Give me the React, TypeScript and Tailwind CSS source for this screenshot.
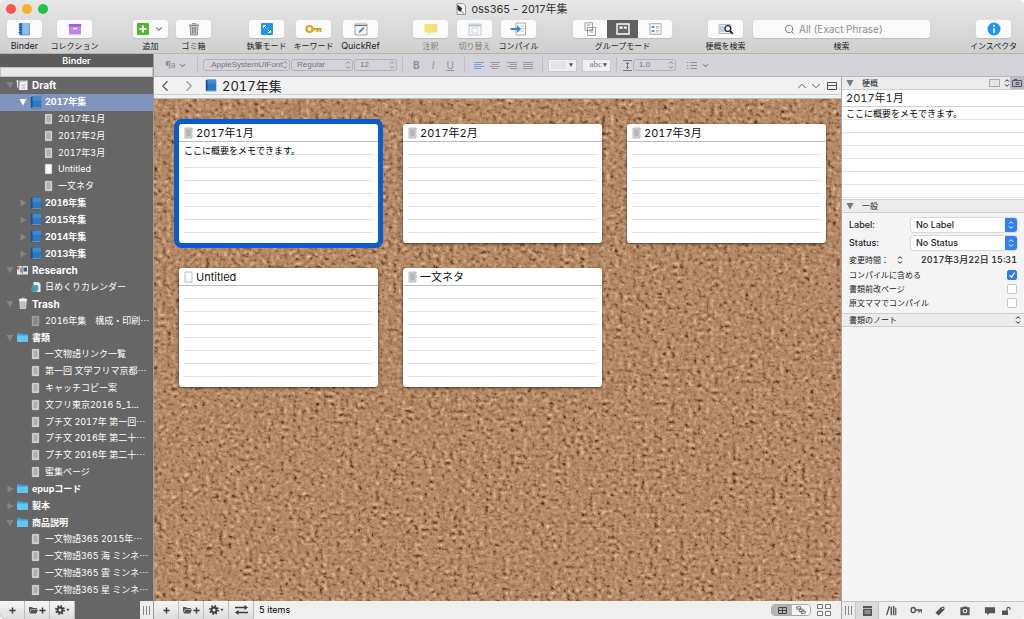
import { useState, type ReactNode } from 'react';
import clsx from 'clsx';
import { ChevronDown, ChevronLeft, ChevronRight, ChevronUp, Search } from 'lucide-react';

type IconName = 'draft' | 'book' | 'text' | 'blank' | 'research' | 'web' | 'trash' | 'dim' | 'folder';

interface BinderItem {
  title: string;
  icon: IconName;
  level: number;
  open?: boolean;
  bold?: boolean;
}

const BINDER: BinderItem[] = [
  { title: 'Draft', icon: 'draft', level: 0, open: true, bold: true },
  { title: '2017年集', icon: 'book', level: 1, open: true, bold: true },
  { title: '2017年1月', icon: 'text', level: 2 },
  { title: '2017年2月', icon: 'text', level: 2 },
  { title: '2017年3月', icon: 'text', level: 2 },
  { title: 'Untitled', icon: 'blank', level: 2 },
  { title: '一文ネタ', icon: 'text', level: 2 },
  { title: '2016年集', icon: 'book', level: 1, open: false, bold: true },
  { title: '2015年集', icon: 'book', level: 1, open: false, bold: true },
  { title: '2014年集', icon: 'book', level: 1, open: false, bold: true },
  { title: '2013年集', icon: 'book', level: 1, open: false, bold: true },
  { title: 'Research', icon: 'research', level: 0, open: true, bold: true },
  { title: '日めくりカレンダー', icon: 'web', level: 1 },
  { title: 'Trash', icon: 'trash', level: 0, open: true, bold: true },
  { title: '2016年集　構成・印刷…', icon: 'dim', level: 1 },
  { title: '書類', icon: 'folder', level: 0, open: true, bold: true },
  { title: '一文物語リンク一覧', icon: 'text', level: 1 },
  { title: '第一回 文学フリマ京都…', icon: 'text', level: 1 },
  { title: 'キャッチコピー案', icon: 'text', level: 1 },
  { title: '文フリ東京2016 5_1...', icon: 'text', level: 1 },
  { title: 'プチ文 2017年 第一回…', icon: 'text', level: 1 },
  { title: 'プチ文 2016年 第二十…', icon: 'text', level: 1 },
  { title: 'プチ文 2016年 第二十…', icon: 'text', level: 1 },
  { title: '蜜集ページ', icon: 'text', level: 1 },
  { title: 'epupコード', icon: 'folder', level: 0, open: false, bold: true },
  { title: '製本', icon: 'folder', level: 0, open: false, bold: true },
  { title: '商品説明', icon: 'folder', level: 0, open: true, bold: true },
  { title: '一文物語365 2015年…', icon: 'text', level: 1 },
  { title: '一文物語365 海 ミンネ…', icon: 'text', level: 1 },
  { title: '一文物語365 雲 ミンネ…', icon: 'text', level: 1 },
  { title: '一文物語365 星 ミンネ…', icon: 'text', level: 1 },
];

const CARDS = [
  { title: '2017年1月', synopsis: 'ここに概要をメモできます。' },
  { title: '2017年2月', synopsis: '' },
  { title: '2017年3月', synopsis: '' },
  { title: 'Untitled', synopsis: '', blank: true },
  { title: '一文ネタ', synopsis: '' },
];

const INDENT = ['pl-[5px]', 'pl-[18px]', 'pl-[31px]'];

const BookIcon = () => (
  <svg viewBox="0 0 12 13" className="h-[13px] w-3 shrink-0">
    <path d="M.8 1.500q0-.8.8-.8h9.600v11.600H1.600q-.8 0-.8-.8z" fill="#174f8d" />
    <path d="M2.600 .8h8.400v10.400H2.600z" fill="#2b79c5" />
    <path d="M2.600 .8h8.400v4H2.600z" fill="#3c8bd5" />
    <path d="M1.600 11.500h9.400" stroke="#b9c9d8" strokeWidth=".5" />
  </svg>
);

const PageIcon = ({ fill = '#ececec', ink = '#a2a2a2', lines = true }: { fill?: string; ink?: string; lines?: boolean }) => (
  <svg viewBox="0 0 9 12" className="h-3 w-[9px] shrink-0">
    <path d="M1 1h7v10H1z" fill={fill} stroke="#8e8e8e" strokeWidth=".6" />
    {lines && <path d="M2.300 2.300h4.400v7.200H2.300z" fill={ink} />}
    {lines && <path d="M2.300 4h4.400M2.300 6h4.400M2.300 8h4.400" stroke={fill} strokeWidth=".4" />}
  </svg>
);

const FolderIcon = () => (
  <svg viewBox="0 0 13 11" className="h-[11px] w-[13px] shrink-0">
    <path d="M1 2q0-1 1-1h3l1 1h5q1 0 1 1v6.500H1z" fill="#3aa0d4" />
    <path d="M1 3.500h11v5.700q0 .8-.8.8H1.800Q1 10 1 9.200z" fill="#62c6f3" />
  </svg>
);

const BinderIcon = ({ name }: { name: IconName }) => {
  switch (name) {
    case 'book':
      return <BookIcon />;
    case 'folder':
      return <FolderIcon />;
    case 'blank':
      return <PageIcon fill="#f8f8f8" lines={false} />;
    case 'dim':
      return <PageIcon fill="#a9a9a9" ink="#7d7d7d" />;
    case 'draft':
      return (
        <svg viewBox="0 0 13 12" className="h-3 w-[13px]">
          <path d="M.5 1l2 .5v8L1.500 9zM3.500 1.500h8v9.500H3z" fill="#f2f2f2" />
          <path d="M2.800 2.500v7.500M5 1v2M7 1v2M9 1v2" stroke="#777" strokeWidth=".7" fill="none" />
          <path d="M5.500 5.500l1.500 1.500L9.500 5M5.500 9h4" stroke="#999" strokeWidth=".8" fill="none" />
        </svg>
      );
    case 'research':
      return (
        <svg viewBox="0 0 13 11" className="h-[11px] w-[13px]">
          <path d="M1 1h11v8.500H1z" fill="#e4e4e4" />
          <path d="M1 1.500h2.200v3H1z" fill="#d8544c" />
          <path d="M4 2.500h2v5H4z" fill="#8a949c" />
          <path d="M7.500 2.500h3.500v4H7.500z" fill="#3f5c78" />
          <path d="M6.500 1v8.500" stroke="#666" strokeWidth=".6" />
        </svg>
      );
    case 'web':
      return (
        <svg viewBox="0 0 12 12" className="h-3 w-3">
          <path d="M3.500 1h5L10.500 3v8h-7z" fill="#e4edf0" />
          <circle cx="4.800" cy="7.500" r="3.500" fill="#4f9fc6" />
          <path d="M3 5.500q2 0 2 2T3 10q-1.500-2 0-4.500M6 4l2.500 1L6.500 7.500z" fill="#3f9d5f" />
        </svg>
      );
    case 'trash':
      return (
        <svg viewBox="0 0 12 13" className="h-[13px] w-3">
          <path d="M2.200 3h7.600L9 12H3z" fill="#cfcfcf" />
          <ellipse cx="6" cy="2.800" rx="4.300" ry="1.200" fill="#f2f2f2" />
          <path d="M4.500 1.300h3" stroke="#ddd" />
          <path d="M4.300 5l.3 6M6 5v6M7.700 5l-.3 6" stroke="#a5a5a5" strokeWidth=".7" />
        </svg>
      );
    default:
      return <PageIcon />;
  }
};

const Disclosure = ({ open, className }: { open?: boolean; className: string }) => (
  <svg viewBox="0 0 10 10" className={clsx('shrink-0', className)} fill="currentColor">
    {open ? <path d="M1.500 2h7L5 8.500z" /> : <path d="M2.500 1.500v7l6-3.500z" />}
  </svg>
);

const Stepper = ({ className }: { className?: string }) => (
  <svg viewBox="0 0 6 10" className={clsx('h-[10px] w-[6px]', className)} fill="none" stroke="currentColor" strokeWidth="1">
    <path d="M1 3.700L3 1.700l2 2M1 6.300l2 2 2-2" />
  </svg>
);

// Toolbar button with its caption underneath
const Tool = ({ label, children, muted }: { label: string; children: ReactNode; muted?: boolean }) => (
  <div className="flex w-[35px] shrink-0 flex-col items-center gap-[3px]">
    <button
      aria-label={label}
      className="flex h-[18px] w-full items-center justify-center rounded-[3px] bg-[#fbfbfb] shadow-[0_1px_1px_rgba(0,0,0,0.12)]"
    >
      {children}
    </button>
    <Caption text={label} muted={muted} />
  </div>
);

const Caption = ({ text, muted }: { text: string; muted?: boolean }) => (
  <span
    className={clsx(
      'whitespace-nowrap leading-[10px]',
      /^[A-Za-z]+$/.test(text) ? 'text-[9px]' : 'text-[8px]',
      muted ? 'text-[#7d7d7d]' : 'text-[#222]'
    )}
  >
    {text}
  </span>
);

const Toolbar = () => (
  <header className="shrink-0 border-b border-[#b3b3b3] bg-linear-to-b from-[#e7e7e7] to-[#cfcfcf]">
    <div className="grid h-[20px] grid-cols-[1fr_auto_1fr] items-center pb-[2px]">
      <div className="flex gap-[6px] pl-[6px]">
        <span className="h-[10px] w-[10px] rounded-full bg-[#f4554f]" />
        <span className="h-[10px] w-[10px] rounded-full bg-[#f6b12c]" />
        <span className="h-[10px] w-[10px] rounded-full bg-[#27c03c]" />
      </div>
      <h1 className="flex items-center gap-[5px] text-[11px] leading-4 text-[#333]">
        <svg viewBox="0 0 10 12" className="h-3 w-[10px]">
          <path d="M1 .5h6l2.500 2.500v8.500H1z" fill="#f5f5f5" stroke="#777" strokeWidth=".7" />
          <path d="M1.500 2L6 5.500 4.500 8.500 2 7zM5 8l3 2.500" fill="#222" stroke="#444" strokeWidth=".6" />
        </svg>
        <span className="proportional-nums">oss365 - 2017年集</span>
      </h1>
    </div>
    <div className="flex h-[33px] pl-[7px] pr-[13px]">
      <div className="flex gap-[15px]">
        <Tool label="Binder">
          <svg viewBox="0 0 13 14" className="h-[14px] w-[13px]">
            <path d="M1.500 1h10v12h-10z" fill="#86bdf3" />
            <path d="M1.500 1h2.700v12H1.500z" fill="#2f6fae" />
            <path d="M11.500 1v12h-10" fill="none" stroke="#4b7fb2" strokeWidth=".7" />
            <path d="M.7 3h2M.7 5.500h2M.7 8h2M.7 10.500h2" stroke="#1e4777" />
          </svg>
        </Tool>
        <Tool label="コレクション">
          <svg viewBox="0 0 14 12" className="h-3 w-[14px]">
            <path d="M1 1h12v10.500H1z" fill="#bf84ec" />
            <path d="M.7 1h12.600v2.500H.7z" fill="#a35bd8" />
            <path d="M5 5.500h4" stroke="#fff" strokeWidth="1.300" />
          </svg>
        </Tool>
      </div>
      <div className="ml-[41px] flex gap-2">
        <Tool label="追加">
          <svg viewBox="0 0 12 12" className="h-3 w-3">
            <rect width="12" height="12" rx="1" fill="#4cb82e" />
            <path d="M6 2.500v7M2.500 6h7" stroke="#fff" strokeWidth="2" />
          </svg>
          <ChevronDown className="ml-[5px] h-[10px] w-[10px] text-[#555]" strokeWidth={2.5} />
        </Tool>
        <Tool label="ゴミ箱">
          <svg viewBox="0 0 12 14" className="h-[14px] w-3">
            <path d="M2 3.500h8l-.6 9.500H2.600z" fill="#c9c9c9" stroke="#777" strokeWidth=".8" />
            <path d="M1 3h10M4.500 2.500v-1h3v1M4.500 5v6.500M6 5v6.500M7.500 5v6.500" stroke="#777" strokeWidth=".8" fill="none" />
          </svg>
        </Tool>
      </div>
      <div className="ml-[38px] flex gap-[12px]">
        <Tool label="執筆モード">
          <svg viewBox="0 0 12 12" className="h-3 w-3">
            <rect width="12" height="12" rx="1" fill="#2196ea" />
            <path d="M2.500 5V2.500H5M2.700 2.700l2.600 2.600M7 9.500h2.500V7M9.300 9.300L6.700 6.700" stroke="#fff" fill="none" />
          </svg>
        </Tool>
        <Tool label="キーワード">
          <svg viewBox="0 0 17 10" className="h-[10px] w-[17px]">
            <circle cx="4.500" cy="5" r="3" fill="none" stroke="#dba51c" strokeWidth="2.200" />
            <path d="M8 4h8.500v4h-2V6.300h-1.200V8h-1.800V6.300H8z" fill="#dba51c" />
          </svg>
        </Tool>
        <Tool label="QuickRef">
          <svg viewBox="0 0 14 13" className="h-[13px] w-[14px]">
            <path d="M1 1h12v11H1z" fill="#f7f7f7" stroke="#8e8e8e" strokeWidth=".8" />
            <path d="M1 2.500h12" stroke="#777" strokeWidth="1.200" />
            <path d="M4.500 10l1-2.500L9.500 4l1 1-3.500 4z" fill="#2b8bd1" />
          </svg>
        </Tool>
      </div>
      <div className="ml-[35px] flex gap-[9px]">
        <Tool label="注釈" muted>
          <svg viewBox="0 0 14 13" className="h-[13px] w-[14px]">
            <path d="M.5 1h13v8.500H7L4 12.500v-3H.5z" fill="#f5df7c" />
          </svg>
        </Tool>
        <Tool label="切り替え" muted>
          <svg viewBox="0 0 14 13" className="h-[13px] w-[14px]" fill="none" stroke="#b9c6d3">
            <path d="M1 1h12v11H1z" />
            <path d="M1 2.500h12" strokeWidth="2" />
            <path d="M4 5h6v5H4z" strokeWidth=".7" />
          </svg>
        </Tool>
        <Tool label="コンパイル">
          <svg viewBox="0 0 17 14" className="h-[14px] w-[17px]">
            <path d="M6 1h9.500v12H6z" fill="#fafafa" stroke="#999" strokeWidth=".8" />
            <path d="M10.500 4h3.500M11.500 6.500h2.500M10.500 9h3.500" stroke="#aaa" strokeWidth=".7" />
            <path d="M.5 6h6.500V3.200L11.200 7 7 10.800V8H.5z" fill="#2490df" />
          </svg>
        </Tool>
      </div>
      <div className="ml-[37px] flex shrink-0 flex-col items-center gap-[3px]">
        <div className="flex overflow-hidden rounded-[3px] bg-[#fbfbfb] shadow-[0_1px_1px_rgba(0,0,0,0.12)]">
          <button aria-label="Document" className="flex h-[18px] w-[34px] items-center justify-center">
            <svg viewBox="0 0 14 14" className="h-[14px] w-[14px]" fill="#fafafa" stroke="#888" strokeWidth=".8">
              <path d="M2 .8h7.500v7.500H2zM4.500 5.500h8v8H4.500z" />
              <path d="M4 3h3.500M6.500 8h4M6.500 10h4" />
            </svg>
          </button>
          <button aria-label="Corkboard" aria-pressed className="flex h-[18px] w-[31px] items-center justify-center bg-[#606060]">
            <svg viewBox="0 0 14 12" className="h-3 w-[14px]">
              <path d="M1 1h12v10H1z" fill="#666" stroke="#fff" strokeWidth="1.400" />
              <path d="M3.500 3.500h3v2.300h-3zM7.800 3.500h3v2.300h-3z" fill="#fff" />
            </svg>
          </button>
          <button aria-label="Outliner" className="flex h-[18px] w-[34px] items-center justify-center">
            <svg viewBox="0 0 13 12" className="h-3 w-[13px]">
              <path d="M1 .7h11v10.600H1z" fill="#fafafa" stroke="#999" strokeWidth=".8" />
              <path d="M2.700 3h2.600v2H2.700zM2.700 7h2.600v2H2.700z" fill="#3b97cf" />
              <path d="M7 3.500h3M7 5h3M7 7.500h3M7 9h3" stroke="#999" strokeWidth=".7" />
            </svg>
          </button>
        </div>
        <Caption text="グループモード" />
      </div>
      <div className="ml-[36px]">
        <Tool label="梗概を検索">
          <svg viewBox="0 0 16 12" className="h-3 w-4">
            <path d="M1 1.500h12v9H1z" fill="#eee" stroke="#999" strokeWidth=".7" />
            <path d="M2 4h4M2 6h4M2 8h5" stroke="#69acc9" strokeWidth=".8" />
            <circle cx="9.800" cy="5.500" r="2.900" fill="#fff" stroke="#222" strokeWidth="1.300" />
            <path d="M12 7.800l2.800 3" stroke="#222" strokeWidth="1.700" />
          </svg>
        </Tool>
      </div>
      <div className="ml-[10px] flex flex-1 flex-col items-center gap-[3px]">
        <div className="flex h-[18px] w-full items-center justify-center gap-1 rounded-[3px] bg-[#fafafa] shadow-[0_1px_1px_rgba(0,0,0,0.12)]">
          <Search className="h-[11px] w-[11px] text-[#777]" />
          <input
            id="search"
            aria-label="検索"
            placeholder="All (Exact Phrase)"
            className="h-4 w-[100px] bg-transparent text-[10px] text-[#333] outline-none placeholder:text-[#8f8f8f]"
          />
        </div>
        <label htmlFor="search" className="text-[8px] leading-[10px] text-[#222]">検索</label>
      </div>
      <div className="ml-[46px]">
        <Tool label="インスペクタ">
          <svg viewBox="0 0 14 14" className="h-[14px] w-[14px]">
            <circle cx="7" cy="7" r="6.500" fill="#1d95ee" />
            <circle cx="7" cy="3.800" r="1" fill="#fff" />
            <path d="M7 6v5" stroke="#fff" strokeWidth="1.500" />
          </svg>
        </Tool>
      </div>
    </div>
  </header>
);

const FormatSelect = ({ label, value, className }: { label: string; value: string; className: string }) => (
  <span className={clsx('relative flex h-3 shrink-0 items-center rounded-[3px] border border-[#b3b1b7]', className)}>
    <select
      aria-label={label}
      className="h-full w-full appearance-none bg-transparent pl-[5px] font-['Liberation_Sans'] text-[8px] leading-none text-[#77757b] outline-none"
    >
      <option>{value}</option>
    </select>
    <Stepper className="pointer-events-none absolute right-px text-[#8b898f]" />
  </span>
);

const Divider = () => <span className="h-[16px] w-px bg-[#bfbdc3]" />;

const ALIGNMENTS = [
  { label: 'Left', d: 'M0 1.500h10M0 3.500h7M0 5.500h10M0 7.500h7', active: true },
  { label: 'Center', d: 'M0 1.500h10M2 3.500h6M0 5.500h10M2 7.500h6' },
  { label: 'Right', d: 'M0 1.500h10M3 3.500h7M0 5.500h10M3 7.500h7' },
  { label: 'Justify', d: 'M0 1.500h10M0 3.500h10M0 5.500h10M0 7.500h10' },
];

const FormatBar = () => (
  <div className="flex h-[23px] shrink-0 items-center border-b border-[#b8b8b8] bg-[#d4d3d9] pl-[11px] text-[#8f8d93]">
    <button className="flex w-[32px] items-center text-[10px]">
      ¶<span className="text-[8px]">a</span>
      <ChevronDown className="ml-[2px] h-[9px] w-[9px]" strokeWidth={3} />
    </button>
    <Divider />
    <div className="flex gap-px pl-[5px] pr-[5px]">
      <FormatSelect label="Font" value=".AppleSystemUIFont" className="w-[87px]" />
      <FormatSelect label="Style" value="Regular" className="w-[62px]" />
      <FormatSelect label="Size" value="12" className="w-[43px]" />
    </div>
    <Divider />
    <div className="flex w-[61px] justify-around px-1 text-[10px]">
      <button className="font-bold">B</button>
      <button className="italic">I</button>
      <button className="underline">U</button>
    </div>
    <Divider />
    <div className="flex w-[77px] justify-around px-[6px]">
      {ALIGNMENTS.map((a) => (
        <button key={a.label} aria-label={a.label}>
          <svg viewBox="0 0 10 9" className={clsx('h-[9px] w-[10px]', a.active ? 'text-[#6aa5e2]' : 'text-[#9a989e]')} stroke="currentColor">
            <path d={a.d} />
          </svg>
        </button>
      ))}
    </div>
    <Divider />
    <div className="flex gap-[5px] px-[5px]">
      <button aria-label="Text color" className="flex h-[13px] w-[29px] items-center justify-end gap-[2px] border border-[#c9c8cd] bg-[#f0f0f2] pl-[2px] pr-[2px]">
        <span className="h-2 flex-1 bg-[#e4e3e7]" />
        <Disclosure open className="h-[6px] w-[6px] text-[#555]" />
      </button>
      <button className="flex h-[13px] w-[29px] items-center justify-end border border-[#c9c8cd] bg-[#f0f0f2] pr-[2px] font-['Liberation_Serif'] text-[9px] text-[#777]">
        abc
        <Disclosure open className="h-[6px] w-[6px] text-[#555]" />
      </button>
    </div>
    <Divider />
    <svg viewBox="0 0 9 11" className="ml-[6px] mr-px h-[11px] w-[9px]" fill="none" stroke="#77757b">
      <path d="M0 .5h9M0 10.500h9M4.500 2.500v6M3 4l1.500-1.500L6 4M3 7l1.500 1.500L6 7" />
    </svg>
    <FormatSelect label="Line spacing" value="1.0" className="w-[43px]" />
    <button aria-label="Lists" className="ml-[11px] flex items-center gap-[4px]">
      <svg viewBox="0 0 10 9" className="h-[9px] w-[10px]" stroke="currentColor">
        <path d="M0 1.500h1.500M3.500 1.500h6.500M0 4.500h1.500M3.500 4.500h6.500M0 7.500h1.500M3.500 7.500h6.500" />
      </svg>
      <ChevronDown className="h-[9px] w-[9px]" strokeWidth={3} />
    </button>
  </div>
);

const FootButton = ({ label, children }: { label: string; children: ReactNode }) => (
  <button aria-label={label} className="flex w-[25px] shrink-0 items-center justify-center gap-px border-r border-[#bdbdbd] bg-linear-to-b from-[#f6f6f6] to-[#dcdcdc] text-[#3c3c3c]">
    {children}
  </button>
);

const PlusGlyph = () => (
  <svg viewBox="0 0 8 8" className="h-[7px] w-[7px]" stroke="currentColor" strokeWidth="1.700">
    <path d="M4 .5v7M.5 4h7" />
  </svg>
);

const GearGlyph = () => (
  <svg viewBox="0 0 12 12" className="h-[10px] w-[10px]" fill="none" stroke="currentColor">
    <circle cx="6" cy="6" r="3" strokeWidth="2.300" />
    <circle cx="6" cy="6" r="4.900" strokeWidth="2" strokeDasharray="1.920 1.920" />
  </svg>
);

const AddButtons = () => (
  <>
    <FootButton label="Add"><PlusGlyph /></FootButton>
    <FootButton label="Add folder">
      <svg viewBox="0 0 9 8" className="h-2 w-[9px]" fill="#555">
        <path d="M0 1h3l1 1h4v1H2L0 7z" />
        <path d="M2.300 3.500H9L7.300 7.500H.5z" />
      </svg>
      <PlusGlyph />
    </FootButton>
    <FootButton label="Actions">
      <GearGlyph />
      <Disclosure open className="h-[4px] w-[4px]" />
    </FootButton>
  </>
);

const Grip = () => (
  <span className="flex h-full w-[13px] shrink-0 items-center justify-center gap-[2px] bg-[#ececec]">
    <span className="h-[9px] w-px bg-[#888]" />
    <span className="h-[9px] w-px bg-[#888]" />
    <span className="h-[9px] w-px bg-[#888]" />
  </span>
);

// The ellipsis sits mid-height, as in Japanese typesetting
const BinderTitle = ({ title }: { title: string }) =>
  title.endsWith('…') ? (
    <>
      {title.slice(0, -1)}
      <span className="font-['Noto_Sans_CJK_JP']">…</span>
    </>
  ) : (
    title
  );

const Binder = () => {
  const [selected, setSelected] = useState(1);

  return (
    <aside className="flex w-[154px] shrink-0 flex-col border-r border-[#9a9a9a] bg-[#666]">
      <h2 className="h-[13px] shrink-0 bg-[#5c5c5c] text-center text-[9px] font-semibold leading-[13px] text-white">Binder</h2>
      <input aria-label="Search binder" className="h-[10px] w-full shrink-0 border border-[#c4c4c4] bg-[#e9e9e9] px-1 text-[8px] outline-none" />
      <ul className="flex min-h-0 flex-1 flex-col overflow-hidden pb-[3px]">
        {BINDER.map((item, i) => (
          <li key={i} className={clsx('flex max-h-[17px] min-h-[16px] flex-1', i === selected && 'bg-[#8095bd]')}>
            <button
              onClick={() => setSelected(i)}
              className={clsx('flex min-w-0 flex-1 items-center text-left text-white', INDENT[item.level])}
            >
              <span className="w-[10px] shrink-0">
                {item.open !== undefined && (
                  <Disclosure open={item.open} className={clsx('h-[10px] w-[10px]', i === selected ? 'text-white' : 'text-[#858585]')} />
                )}
              </span>
              <span className="flex w-[17px] shrink-0 items-center pl-px">
                <span className="flex w-[13px] justify-center"><BinderIcon name={item.icon} /></span>
              </span>
              <span
                className={clsx(
                  'whitespace-nowrap leading-4',
                  item.bold && 'font-bold',
                  item.bold && /^[A-Za-z]+$/.test(item.title) ? 'text-[10px]' : 'text-[9px]'
                )}
              >
                <BinderTitle title={item.title} />
              </span>
            </button>
          </li>
        ))}
      </ul>
      <div className="flex h-[18px] shrink-0">
        <AddButtons />
        <span className="flex-1" />
        <Grip />
      </div>
    </aside>
  );
};

// Grainy board surface: noise mapped onto a brown ramp with a few dark specks
const CorkTexture = () => (
  <svg className="absolute inset-0 h-full w-full" aria-hidden>
    <filter id="cork" x="0" y="0" width="100%" height="100%" colorInterpolationFilters="sRGB">
      <feTurbulence type="fractalNoise" baseFrequency="0.230 0.270" numOctaves="4" seed="23" />
      <feColorMatrix values="0.700 0.600 0.400 0 -0.350  0.700 0.600 0.400 0 -0.350  0.700 0.600 0.400 0 -0.350  0 0 0 0 1" />
      <feComponentTransfer>
        <feFuncR type="table" tableValues="0.280 0.360 0.530 0.650 0.705 0.750 0.810 0.870 0.900" />
        <feFuncG type="table" tableValues="0.160 0.220 0.360 0.480 0.535 0.580 0.650 0.720 0.780" />
        <feFuncB type="table" tableValues="0.110 0.150 0.250 0.350 0.400 0.440 0.510 0.580 0.640" />
      </feComponentTransfer>
    </filter>
    <rect width="100%" height="100%" filter="url(#cork)" />
  </svg>
);

const RuledLines = ({ count, children }: { count: number; children?: ReactNode }) => (
  <div className="text-[9px] leading-[13px] text-black">
    {Array.from({ length: count }, (_, i) => (
      <div key={i} className="h-[13px] border-b border-[#e2e2e2]">
        {i === 0 && children}
      </div>
    ))}
  </div>
);

const Corkboard = () => {
  const [selected, setSelected] = useState(0);

  return (
    <div className="relative min-h-0 flex-1 overflow-hidden">
      <CorkTexture />
      <div className="relative flex flex-wrap gap-x-[25px] gap-y-[25px] py-[25px] pl-[25px] pr-[15px]">
        {CARDS.map((card, i) => (
          <article
            key={card.title}
            onClick={() => setSelected(i)}
            className={clsx(
              'h-[119px] w-[199px] rounded-[3px] bg-white',
              i === selected ? 'shadow-[0_0_0_5px_#0b5bcd]' : 'shadow-[0_1px_3px_rgba(0,0,0,0.6)]'
            )}
          >
            <h3 className="flex h-[18px] items-center gap-[3px] border-b border-[#bcbcbc] pl-[5px] pt-px text-[11px] leading-4 text-[#111]">
              <PageIcon fill={card.blank ? '#fff' : '#e6e6e6'} ink="#a8a8a8" lines={!card.blank} />
              {card.title}
            </h3>
            <div className="px-[5px]">
              <RuledLines count={7}>
                <p className="pt-[2px]">{card.synopsis}</p>
              </RuledLines>
            </div>
          </article>
        ))}
      </div>
    </div>
  );
};

const Editor = () => (
  <main className="flex min-w-0 flex-1 flex-col">
    <div className="flex h-[18px] shrink-0 items-center border-b border-[#cfcfcf] bg-[#f1f1f1] pl-[2px] pr-[4px] text-[#555]">
      <button aria-label="Back"><ChevronLeft className="h-[18px] w-[18px]" strokeWidth={1.5} /></button>
      <button aria-label="Forward" className="ml-[6px] text-[#999]"><ChevronRight className="h-[18px] w-[18px]" strokeWidth={1.5} /></button>
      <span className="ml-[7px]"><BookIcon /></span>
      <h2 className="ml-[5px] flex-1 text-[13px] leading-4 text-[#222]">2017年集</h2>
      <button aria-label="Previous"><ChevronUp className="h-[14px] w-[14px]" strokeWidth={1.7} /></button>
      <button aria-label="Next"><ChevronDown className="h-[14px] w-[14px]" strokeWidth={1.7} /></button>
      <button aria-label="Split" className="ml-[4px]">
        <svg viewBox="0 0 10 8" className="h-2 w-[10px]" fill="none" stroke="currentColor">
          <path d="M.5 .5h9v7h-9zM.5 3.500h9" />
        </svg>
      </button>
    </div>
    <div className="h-1 shrink-0 border-b border-[#c9b8a8] bg-[#f1f1f1]" />
    <Corkboard />
    <footer className="flex h-[18px] shrink-0 items-center bg-[#efefef]">
      <div className="flex h-full">
        <AddButtons />
        <FootButton label="Swap">
          <svg viewBox="0 0 13 10" className="h-[10px] w-[13px]" fill="none" stroke="currentColor" strokeWidth="1.300">
            <path d="M0 2.500h11M2 7.500h11" />
            <path d="M9.500 0L13 2.500 9.500 5zM3.500 5L0 7.500 3.500 10z" fill="currentColor" stroke="none" />
          </svg>
        </FootButton>
      </div>
      <span className="ml-[5px] flex-1 text-[9px] text-black">5 items</span>
      <div className="flex overflow-hidden rounded-[4px] border border-[#a9a9a9]">
        <button aria-label="Grid" aria-pressed className="flex h-[10px] w-[20px] items-center justify-center bg-[#b4b4b4]">
          <svg viewBox="0 0 9 7" className="h-[7px] w-[9px]" fill="none" stroke="#444">
            <path d="M.5 .5h8v6h-8zM.5 3.500h8M4.500 .5v6" />
          </svg>
        </button>
        <button aria-label="Freeform" className="flex h-[10px] w-[18px] items-center justify-center bg-[#f5f5f5]">
          <svg viewBox="0 0 10 8" className="h-2 w-[10px]" fill="#f5f5f5" stroke="#555" strokeWidth=".8">
            <path d="M.5 1l4-.5.5 2-4 .8zM3 3.500l4-.5.5 2-4 .8zM5 5.500l4-.5.5 2-4 .5z" />
          </svg>
        </button>
      </div>
      <button aria-label="Card options" className="ml-[6px] mr-[10px]">
        <svg viewBox="0 0 14 12" className="h-3 w-[14px]" fill="#fff" stroke="#777">
          <path d="M.5 .5h5v4h-5zM8.500 .5h5v4h-5zM.5 7.500h5v4h-5zM8.500 7.500h5v4h-5z" />
        </svg>
      </button>
    </footer>
  </main>
);

const InspectorSelect = ({ id, label, value }: { id: string; label: string; value: string }) => (
  <div className="flex h-[18px] items-center">
    <label htmlFor={id} className="w-[62px] text-[9px] font-medium">{label}</label>
    <span className="relative flex h-[14px] flex-1 overflow-hidden rounded-[3px] bg-white shadow-[0_0_1px_1px_rgba(0,0,0,0.12)]">
      <select id={id} className="h-full w-full appearance-none pl-[5px] text-[9px] font-medium outline-none">
        <option>{value}</option>
      </select>
      <span className="pointer-events-none absolute inset-y-0 right-0 flex w-3 items-center justify-center bg-[#2f80f0] text-white">
        <Stepper />
      </span>
    </span>
  </div>
);

const CheckRow = ({ id, label, defaultChecked }: { id: string; label: string; defaultChecked?: boolean }) => (
  <div className="flex h-[14px] items-center justify-between">
    <label htmlFor={id} className="text-[8px]">{label}</label>
    <span className="relative flex">
      <input
        id={id}
        type="checkbox"
        defaultChecked={defaultChecked}
        className="peer h-[10px] w-[10px] appearance-none rounded-[2px] border border-[#c4c4c4] bg-white checked:border-[#2c7cec] checked:bg-[#2c7cec]"
      />
      <svg viewBox="0 0 10 10" className="pointer-events-none absolute inset-0 hidden h-[10px] w-[10px] peer-checked:block" fill="none" stroke="#fff" strokeWidth="1.300">
        <path d="M2.500 5.200l2 2 3.200-4.700" />
      </svg>
    </span>
  </div>
);

const INSPECTOR_TABS = [
  { label: 'References', d: 'M1 11L4 1l1.500.5-3 9.500zM6 2h1.700v9H6zM8.700 1h1.500v10H8.700zM11 3h1.300v8H11z' },
  { label: 'Keywords', d: 'M3.500 2a3 3.500 0 110 7 3 3.500 0 010-7zm0 1.500a1.500 2 0 100 4 1.500 2 0 000-4zM6.500 4.700H13V8h-1.500V6.200h-1V8H9V6.200H6.500z' },
  { label: 'Metadata', d: 'M7.500 2.500L11 1.500 11.500 5 5 11.500 1.500 8.500zM9.500 3a.8.8 0 100 1.600.8.8 0 000-1.600z' },
  { label: 'Snapshots', d: 'M1.500 2.500h3l.5-1h3.500l.5 1h2.500v8.500h-10zM6.500 4a2.500 2.500 0 100 5 2.500 2.500 0 000-5zm0 1.200a1.300 1.300 0 110 2.600 1.300 1.300 0 010-2.600z' },
  { label: 'Comments', d: 'M1 2.500h11v6.500H6l-2.500 2.500V9H1z' },
];

const Inspector = () => (
  <aside className="flex w-[183px] shrink-0 flex-col border-l border-[#a8a8a8] bg-[#f4f4f4] text-[#222]">
    <div className="flex h-[13px] shrink-0 items-center border-b border-[#cfcfcf] bg-[#ececec] pl-[3px]">
      <Disclosure open className="h-[10px] w-[10px] text-[#777]" />
      <h2 className="ml-[7px] flex-1 text-[8px]">梗概</h2>
      <span className="h-2 w-[11px] border border-[#aaa] bg-[#e4e4e8]" />
      <Stepper className="ml-[4px]" />
      <button aria-label="Toggle image" className="flex h-3 w-[14px] items-center justify-center bg-[#b9bcc8]">
        <svg viewBox="0 0 10 8" className="h-2 w-[10px]" fill="none" stroke="#556">
          <path d="M.5 1.500h9v6h-9zM2 .5h3M4 3.500h3v2H4z" />
        </svg>
      </button>
    </div>
    <p className="h-[17px] shrink-0 border-b border-[#cfcfcf] bg-white pl-[4px] text-[11px] leading-4">2017年1月</p>
    <div className="h-[93px] shrink-0 overflow-hidden border-b border-[#cfcfcf] bg-white [&_p]:pl-[4px]">
      <RuledLines count={7}>
        <p>ここに概要をメモできます。</p>
      </RuledLines>
    </div>
    <div className="flex h-[13px] shrink-0 items-center border-b border-[#cfcfcf] bg-[#ececec] pl-[3px]">
      <Disclosure open className="h-[10px] w-[10px] text-[#777]" />
      <h2 className="ml-[7px] text-[8px]">一般</h2>
    </div>
    <form className="shrink-0 pb-[3px] pl-[7px] pr-[7px] pt-[3px]">
      <InspectorSelect id="label" label="Label:" value="No Label" />
      <InspectorSelect id="status" label="Status:" value="No Status" />
      <div className="flex h-4 items-center text-[8px]">
        変更時間：
        <Stepper className="ml-[8px]" />
        <span className="flex-1 text-right text-[9px] font-medium">2017年3月22日 15:31</span>
      </div>
      <CheckRow id="compile" label="コンパイルに含める" defaultChecked />
      <CheckRow id="break" label="書類前改ページ" />
      <CheckRow id="asis" label="原文ママでコンパイル" />
    </form>
    <div className="flex h-[14px] shrink-0 items-center justify-between border-y border-[#cfcfcf] bg-[#ececec] pl-[7px] pr-[3px] text-[8px]">
      書類のノート
      <Stepper />
    </div>
    <textarea aria-label="書類のノート" className="min-h-0 flex-1 resize-none bg-[#f5f5f5] px-1 text-[9px] outline-none" />
    <footer className="flex h-[18px] shrink-0 items-center border-t border-[#c4c4c4] bg-[#efefef] pr-[13px] text-[#555]">
      <Grip />
      <button aria-label="Notes" className="flex h-full w-[24px] items-center justify-center border-x border-[#c4c4c4] bg-[#dadada]">
        <svg viewBox="0 0 9 10" className="h-[10px] w-[9px]" fill="currentColor">
          <path d="M0 0h9v2.200H0zM0 3h9v7H0z" />
          <path d="M1.500 5h6M1.500 7h6" stroke="#ddd" strokeWidth=".8" />
        </svg>
      </button>
      {INSPECTOR_TABS.map((tab) => (
        <button key={tab.label} aria-label={tab.label} className="flex flex-1 items-center justify-center">
          <svg viewBox="0 0 13 13" className="h-3 w-3" fill="currentColor" fillRule="evenodd">
            <path d={tab.d} />
          </svg>
        </button>
      ))}
      <button aria-label="Lock">
        <svg viewBox="0 0 9 9" className="h-[9px] w-[9px]" fill="currentColor">
          <path d="M0 4.500h6V9H0z" />
          <path d="M5 5V2.800q0-1.500 1.500-1.500T8 2.800v1" fill="none" stroke="currentColor" strokeWidth="1.200" />
        </svg>
      </button>
    </footer>
  </aside>
);

export default function App() {
  return (
    <div
      lang="ja"
      className="flex h-screen flex-col overflow-hidden rounded-[5px] bg-[#efefef] font-[Inter,'Noto_Sans_CJK_JP',sans-serif] tabular-nums"
    >
      <Toolbar />
      <div className="flex min-h-0 flex-1">
        <Binder />
        <div className="flex min-w-0 flex-1 flex-col">
          <FormatBar />
          <div className="flex min-h-0 flex-1">
            <Editor />
            <Inspector />
          </div>
        </div>
      </div>
    </div>
  );
}
